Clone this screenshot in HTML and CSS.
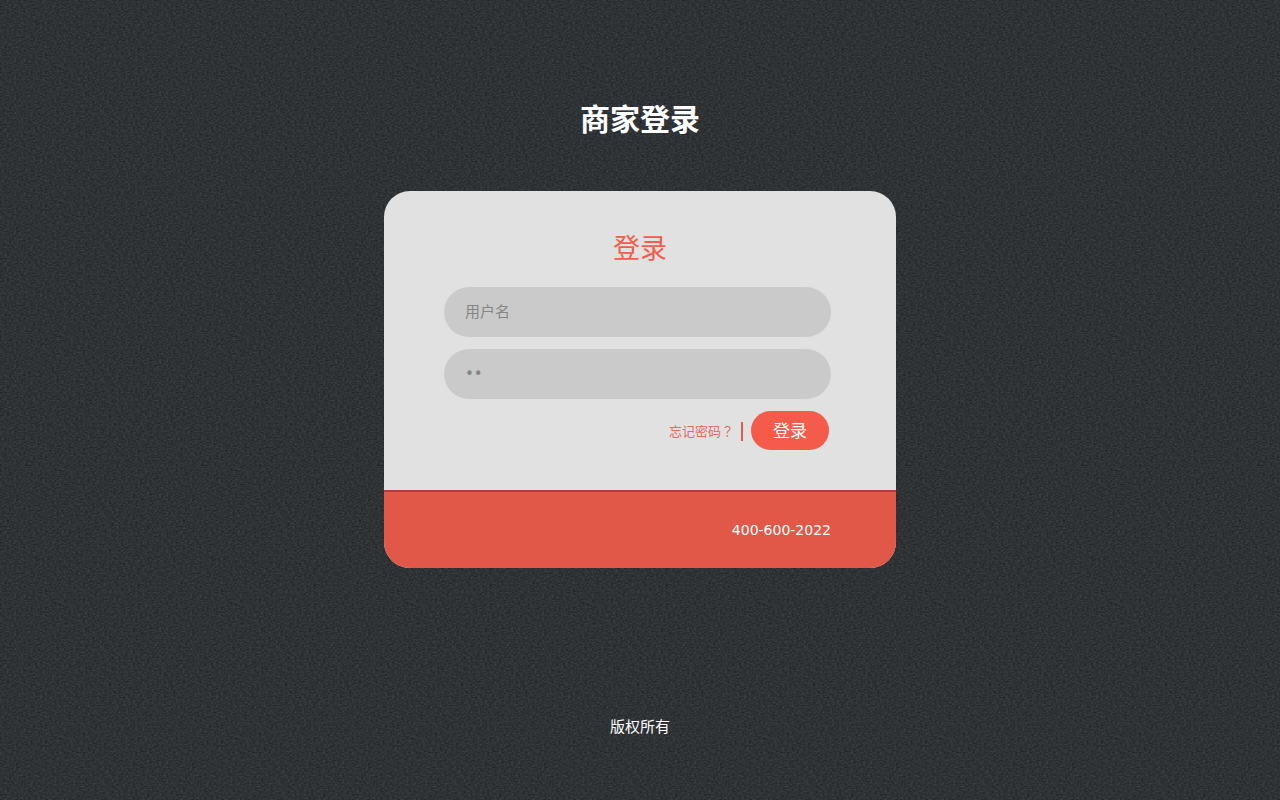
FILE: index.html
```html
<!DOCTYPE html>
<html lang="zh-CN">
<head>
<meta charset="utf-8">
<meta name="viewport" content="width=device-width, initial-scale=1">
<title>商家登录</title>
<link rel="stylesheet" href="styles.css">
</head>
<body>
<main class="page">
  <h1 class="page-title">商家登录</h1>
  <section class="card">
    <form class="login">
      <h2 class="login-title">登录</h2>
      <input class="field" type="text" aria-label="用户名" placeholder="用户名">
      <input class="field" type="password" aria-label="密码" value="密码">
      <div class="actions">
        <a class="forgot" href="#">忘记密码<span class="mark" lang="ja">？</span></a>
        <button class="submit" type="submit">登录</button>
      </div>
    </form>
    <div class="contact">400-600-2022</div>
  </section>
  <footer class="copyright">版权所有</footer>
</main>
</body>
</html>
```

FILE: styles.css
```css
* {
  box-sizing: border-box;
}

body {
  margin: 0;
  min-height: 100vh;
  background-color: #2d3235;
  background-image: url("data:image/svg+xml,%3Csvg xmlns='http://www.w3.org/2000/svg' width='176' height='134'%3E%3Cfilter id='n' x='0' y='0' width='100%25' height='100%25' color-interpolation-filters='sRGB'%3E%3CfeTurbulence type='fractalNoise' baseFrequency='.42 .62' numOctaves='2' seed='4' stitchTiles='stitch'/%3E%3CfeColorMatrix values='.16 0 0 0 .102 .16 0 0 0 .118 .16 0 0 0 .13 0 0 0 0 1'/%3E%3C/filter%3E%3Crect width='176' height='134' filter='url(%23n)'/%3E%3C/svg%3E");
  font-family: "DejaVu Sans", "Noto Sans CJK SC", sans-serif;
}

.page {
  display: flex;
  flex-direction: column;
  align-items: center;
  padding: 98px 16px 48px;
}

.page-title {
  margin: 0 0 49px;
  color: #fff;
  font-size: 30px;
  line-height: 44px;
}

.card {
  width: 40%;
  min-width: 512px;
  border-radius: 26px;
  overflow: hidden;
  background: #e1e1e1;
}

.login {
  display: flex;
  flex-direction: column;
  gap: 12px;
  padding: 38px 65px 40px 60px;
}

.login-title {
  margin: 0 -5px 6px 0;
  color: #f35d4c;
  font-size: 27px;
  font-weight: 400;
  line-height: 40px;
  text-align: center;
}

.field {
  width: 100%;
  height: 50px;
  padding: 0 21px;
  border: 0;
  border-radius: 25px;
  outline: 0;
  background: #cacaca;
  color: #858585;
  font: 15px "DejaVu Sans", "Noto Sans CJK SC", sans-serif;
}

.field::placeholder {
  color: #858585;
}

.actions {
  display: flex;
  justify-content: flex-end;
  align-items: center;
  gap: 8px;
  padding-right: 2px;
}

.forgot {
  margin-top: 2px;
  padding-right: 7px;
  border-right: 2px solid #e15848;
  color: #e9675a;
  font-size: 13px;
  line-height: 18px;
  text-decoration: none;
}

.mark {
  font-family: "Noto Sans CJK JP", sans-serif;
}

.submit {
  height: 39px;
  padding: 0 22px 2px;
  border: 0;
  border-radius: 20px;
  background: #f55b4b;
  color: #fff;
  font: 17px "DejaVu Sans", "Noto Sans CJK SC", sans-serif;
  cursor: pointer;
}

.contact {
  padding: 29px 65px;
  border-top: 2px solid #a64337;
  background: #e15848;
  color: #fff;
  font-size: 14px;
  line-height: 18px;
  text-align: right;
}

.copyright {
  margin-top: 148px;
  color: #fff;
  font-size: 15px;
  line-height: 22px;
}
```
